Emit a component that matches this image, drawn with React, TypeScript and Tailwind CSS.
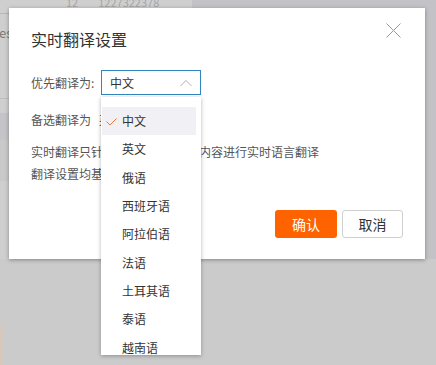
import React from "react";

const langs = ["中文", "英文", "俄语", "西班牙语", "阿拉伯语", "法语", "土耳其语", "泰语", "越南语"];

export default function App() {
  return (
    <div
      className="relative w-[436px] h-[365px] overflow-hidden bg-[#cbcbcb]"
      style={{ fontFamily: '"Noto Sans CJK SC", "Noto Sans", sans-serif' }}
    >
      {/* background page (dimmed) */}
      <div className="absolute left-0 top-0 w-[192px] h-[259px] bg-[#cfcfcf]">
        <div className="flex h-[8px] items-end gap-[20px] pl-[66px] text-[11px] leading-[11px] text-[#a5a5a5] overflow-hidden">
          <span>12</span>
          <span>1227322378</span>
        </div>
        <div className="mt-[5px] h-px bg-[#b8b8b8]" />
        <div className="mt-[12px] text-[13px] leading-[14px] text-[#7a7a7a] -ml-[1px]">es</div>
        <div className="mt-[58px] h-px bg-[#bdbdbd]" />
        <div className="mt-[14px] h-[27px] bg-[#c5c5c9]" />
        <div className="h-[41px] bg-[#c9c9c9]" />
      </div>
      <div className="absolute left-[192px] top-0 right-0 h-[259px] bg-[#c3c2c7]" />
      <div className="absolute left-0 top-[325px] w-[4px] h-[40px] bg-[#d6c8bd]" />

      {/* modal */}
      <div className="absolute left-[9px] top-[8px] w-[416px] h-[251px] bg-white shadow-[0_1px_4px_rgba(0,0,0,0.35)]">
        <button className="absolute left-[377px] top-[15px] w-[15px] h-[15px]">
          <svg width="15" height="15" viewBox="0 0 15 15">
            <path d="M0.5 0.5L14.5 14.5M14.5 0.5L0.5 14.5" stroke="#9a9a9a" strokeWidth="1" />
          </svg>
        </button>
        <div className="flex flex-col px-[22px] pt-[19px]">
          <div className="text-[16px] leading-[24px] text-[#333]">实时翻译设置</div>

          <div className="mt-[19px] flex items-center">
            <div className="w-[70px] text-[12px] text-[#555]">优先翻译为:</div>
            <div className="relative">
              <div className="flex h-[25px] w-[100px] items-center justify-between border border-[#3286bd] pl-[8px] pr-[8px]">
                <span className="text-[12px] text-[#333]">中文</span>
                <svg width="12" height="8" viewBox="0 0 12 8">
                  <path d="M0.5 7L6 1.5L11.5 7" fill="none" stroke="#b0b0b0" strokeWidth="1" />
                </svg>
              </div>
              <div className="absolute left-0 top-[27px] z-10 w-[100px] h-[258px] overflow-hidden bg-white shadow-[0_1px_4px_rgba(0,0,0,0.3)] pt-[10px]">
                {langs.map((l, i) => (
                  <div
                    key={l}
                    className={`relative flex h-[28.3px] w-[94px] ml-[1px] items-center pl-[20px] text-[12px] text-[#333] ${
                      i === 0 ? "bg-[#f0f0f5]" : ""
                    }`}
                  >
                    {i === 0 && (
                      <svg className="absolute left-[4px] top-[11px]" width="11" height="8" viewBox="0 0 11 8">
                        <path d="M0.5 3.5L4 7L10.5 0.5" fill="none" stroke="#f07a3c" strokeWidth="1" />
                      </svg>
                    )}
                    {l}
                  </div>
                ))}
              </div>
            </div>
          </div>

          <div className="mt-[14px] flex items-center text-[12px] leading-[22px] text-[#555]">
            <span className="w-[68px]">备选翻译为</span>
            <span>英文</span>
          </div>
          <div className="mt-[10px] text-[12px] leading-[22px] text-[#555] whitespace-nowrap">
            实时翻译只针对买家发送的消息内容进行实时语言翻译
          </div>
          <div className="text-[12px] leading-[22px] text-[#555] whitespace-nowrap">
            翻译设置均基于当前账号
          </div>

          <div className="mt-[25px] flex justify-end gap-[5px]">
            <button className="h-[28px] w-[62px] rounded-[3px] bg-[#ff6300] text-[14px] text-white">确认</button>
            <button className="h-[28px] w-[61px] rounded-[3px] border border-[#cfcfcf] bg-white text-[14px] text-[#333]">
              取消
            </button>
          </div>
        </div>
      </div>
    </div>
  );
}
